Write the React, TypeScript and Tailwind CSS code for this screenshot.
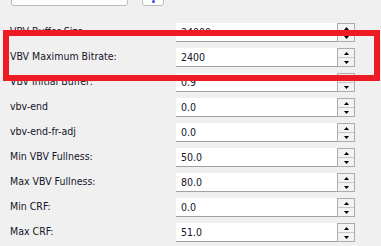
const rows = [
  { label: 'VBV Buffer Size:', value: '24000' },
  { label: 'VBV Maximum Bitrate:', value: '2400' },
  { label: 'VBV Initial Buffer:', value: '0.9' },
  { label: 'vbv-end', value: '0.0' },
  { label: 'vbv-end-fr-adj', value: '0.0' },
  { label: 'Min VBV Fullness:', value: '50.0' },
  { label: 'Max VBV Fullness:', value: '80.0' },
  { label: 'Min CRF:', value: '0.0' },
  { label: 'Max CRF:', value: '51.0' },
];

function Arrow({ up }: { up?: boolean }) {
  return (
    <svg width="5" height="3" viewBox="0 0 5 3" className="block">
      {up ? <polygon points="0,3 5,3 2.5,0" fill="#000" /> : <polygon points="0,0 5,0 2.5,3" fill="#000" />}
    </svg>
  );
}

function Spin() {
  return (
    <div className="flex h-[19px] w-[18px] flex-col border border-[#acacac] bg-[#f3f3f3]">
      <div className="flex flex-1 items-center justify-center border-b border-[#c8c8c8]">
        <Arrow up />
      </div>
      <div className="flex flex-1 items-center justify-center">
        <Arrow />
      </div>
    </div>
  );
}

export default function App() {
  return (
    <div className="relative h-[246px] w-[381px] overflow-hidden bg-[#f0f0f0] font-['DejaVu_Sans_Condensed','DejaVu_Sans',sans-serif] text-[10.5px] text-[#141428]">
      {/* partially visible controls from the section above */}
      <div className="flex h-[6px] items-end overflow-hidden">
        <div className="ml-[11px] h-[12px] w-[117px] rounded-[3px] border border-[#bcbcbc] bg-[#fdfdfd]" />
        <div className="ml-[14px] flex h-[12px] w-[22px] items-end justify-center rounded-[3px] border border-[#bcbcbc] bg-[#fdfdfd] pb-[2px]">
          <div className="h-[3px] w-[3px] rounded-full bg-[#3b4fe0]" />
        </div>
      </div>

      <div className="flex flex-col gap-[6px] pt-[17px]">
        {rows.map((r) => (
          <div key={r.label} className="flex h-[19px] items-center">
            <div className="w-[176px] pb-[3px] pl-[10px] leading-none">{r.label}</div>
            <div className="flex h-[19px] w-[161px] items-center border-b border-[#a0a0a0] bg-white pl-[5px] leading-none">
              {r.value}
            </div>
            <Spin />
          </div>
        ))}
      </div>

      <div className="absolute left-[3px] top-[30px] h-[51px] w-[377px] border-[6px] border-[#ed1c24]" />
    </div>
  );
}
